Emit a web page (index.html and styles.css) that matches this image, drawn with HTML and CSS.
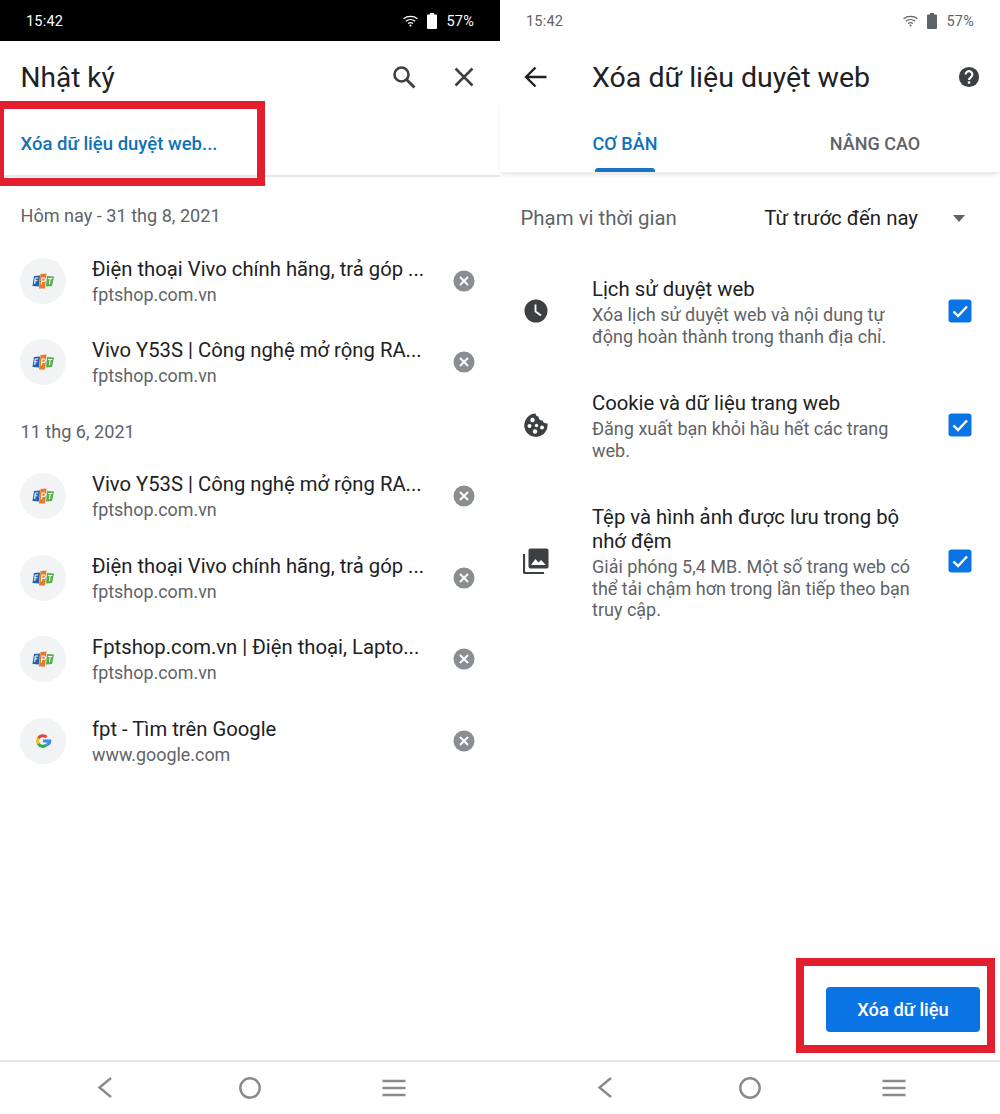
FILE: index.html

```html
<!DOCTYPE html>
<html lang="vi">
<head>
  <meta charset="UTF-8" />
  <meta name="viewport" content="width=device-width, initial-scale=1.0"/>
  <title>Xóa dữ liệu duyệt web</title>
  <link rel="stylesheet" href="styles.css">
</head>
<body>
  <svg class="defs" width="0" height="0" aria-hidden="true">
    <symbol id="wifi" viewBox="0 0 16 12">
      <path d="M.6 3.6C4.6.3 11.4.3 15.4 3.6M3 6.2c2.9-2.3 7.1-2.3 10 0M5.4 8.6c1.5-1.100 3.700-1.100 5.200 0" fill="none" stroke="currentColor" stroke-width="1.3"/>
      <circle cx="8" cy="10.8" r="1.100" fill="currentColor"/>
    </symbol>
    <symbol id="battery" viewBox="0 0 10 16">
      <path d="M3 0h4v1.500h2a1 1 0 0 1 1 1V15a1 1 0 0 1-1 1H1a1 1 0 0 1-1-1V2.500a1 1 0 0 1 1-1h2z" fill="currentColor"/>
    </symbol>
    <symbol id="remove" viewBox="0 0 22 22">
      <circle cx="11" cy="11" r="10.5" fill="#8a8d91"/>
      <path d="M7 7l8 8M15 7l-8 8" stroke="#fff" stroke-width="2" fill="none"/>
    </symbol>
    <symbol id="fpt" viewBox="0 0 22 16">
      <path d="M2 3L8 2.500 7 13.500 .5 13z" fill="#1f63ae"/>
      <path d="M8.500 1L14.500 .5 13 15.500 7 15.500z" fill="#e9782a"/>
      <path d="M15 3L22 3.500 20 13 14 13.500z" fill="#54b047"/>
      <path d="M3.200 5h3M3.200 5L2.700 11M3 7.800h2.400M9.400 11.500L10 5h1.800a1.500 1.500 0 0 1 0 3.400H9.800M16 5.500h4.400M18.200 5.500l-.7 5.800" fill="none" stroke="#fff" stroke-width="1.100"/>
    </symbol>
    <symbol id="check" viewBox="0 0 24 24">
      <rect x=".5" y=".5" width="23" height="23" rx="3" fill="#0b74e5"/>
      <path d="M5.500 12.500l4.500 4.500 9-9.500" fill="none" stroke="#fff" stroke-width="2.400"/>
    </symbol>
    <symbol id="nav-back" viewBox="0 0 16 24">
      <path d="M14 2L2.500 11.500 14 21" fill="none" stroke="currentColor" stroke-width="2.400"/>
    </symbol>
    <symbol id="nav-home" viewBox="0 0 24 24">
      <circle cx="12" cy="12" r="9.700" fill="none" stroke="currentColor" stroke-width="2.400"/>
    </symbol>
    <symbol id="nav-menu" viewBox="0 0 24 18">
      <path d="M.5 2h23M.5 9h23M.5 16h23" fill="none" stroke="currentColor" stroke-width="2.400"/>
    </symbol>
  </svg>

  <div class="screens">
    <!-- history -->
    <section class="screen">
      <div class="status status-dark">
        <span>15:42</span>
        <span class="status-right">
          <svg class="ic-wifi"><use href="#wifi"/></svg>
          <svg class="ic-battery"><use href="#battery"/></svg>
          <span>57%</span>
        </span>
      </div>
      <header class="appbar">
        <h1 class="appbar-title">Nhật ký</h1>
        <svg class="appbar-btn search-btn" viewBox="0 0 24 24"><circle cx="9.500" cy="9.500" r="7" fill="none" stroke="#3c4043" stroke-width="2.600"/><path d="M14.500 14.500L22.500 22.500" stroke="#3c4043" stroke-width="2.800"/></svg>
        <svg class="appbar-btn close-btn" viewBox="0 0 24 24"><path d="M3.500 3.500l17 17M20.500 3.500l-17 17" stroke="#3c4043" stroke-width="2.500"/></svg>
      </header>
      <a class="clear-link">Xóa dữ liệu duyệt web...</a>

      <div class="day day-first">Hôm nay - 31 thg 8, 2021</div>
      <div class="entry">
        <span class="favicon"><svg class="fav-fpt"><use href="#fpt"/></svg></span>
        <div class="entry-text">
          <div class="entry-title">Điện thoại Vivo chính hãng, trả góp ...</div>
          <div class="entry-url">fptshop.com.vn</div>
        </div>
        <svg class="entry-remove"><use href="#remove"/></svg>
      </div>
      <div class="entry">
        <span class="favicon"><svg class="fav-fpt"><use href="#fpt"/></svg></span>
        <div class="entry-text">
          <div class="entry-title">Vivo Y53S | Công nghệ mở rộng RA...</div>
          <div class="entry-url">fptshop.com.vn</div>
        </div>
        <svg class="entry-remove"><use href="#remove"/></svg>
      </div>

      <div class="day">11 thg 6, 2021</div>
      <div class="entry">
        <span class="favicon"><svg class="fav-fpt"><use href="#fpt"/></svg></span>
        <div class="entry-text">
          <div class="entry-title">Vivo Y53S | Công nghệ mở rộng RA...</div>
          <div class="entry-url">fptshop.com.vn</div>
        </div>
        <svg class="entry-remove"><use href="#remove"/></svg>
      </div>
      <div class="entry">
        <span class="favicon"><svg class="fav-fpt"><use href="#fpt"/></svg></span>
        <div class="entry-text">
          <div class="entry-title">Điện thoại Vivo chính hãng, trả góp ...</div>
          <div class="entry-url">fptshop.com.vn</div>
        </div>
        <svg class="entry-remove"><use href="#remove"/></svg>
      </div>
      <div class="entry">
        <span class="favicon"><svg class="fav-fpt"><use href="#fpt"/></svg></span>
        <div class="entry-text">
          <div class="entry-title">Fptshop.com.vn | Điện thoại, Lapto...</div>
          <div class="entry-url">fptshop.com.vn</div>
        </div>
        <svg class="entry-remove"><use href="#remove"/></svg>
      </div>
      <div class="entry">
        <span class="favicon">
          <svg class="fav-google" viewBox="0 0 24 24">
            <path d="M5.800 8.500A7 7 0 0 1 16.700 6.800" fill="none" stroke="#ea4335" stroke-width="4"/>
            <path d="M5.800 15.500a7 7 0 0 1 0-7" fill="none" stroke="#fbbc05" stroke-width="4"/>
            <path d="M17 17a7 7 0 0 1-11.200-1.500" fill="none" stroke="#34a853" stroke-width="4"/>
            <path d="M12 12h9c0 2-1.300 4-4 5" fill="none" stroke="#4285f4" stroke-width="4"/>
          </svg>
        </span>
        <div class="entry-text">
          <div class="entry-title">fpt - Tìm trên Google</div>
          <div class="entry-url">www.google.com</div>
        </div>
        <svg class="entry-remove"><use href="#remove"/></svg>
      </div>

      <nav class="navbar">
        <svg class="nav-back"><use href="#nav-back"/></svg>
        <svg class="nav-home"><use href="#nav-home"/></svg>
        <svg class="nav-menu"><use href="#nav-menu"/></svg>
      </nav>
      <div class="callout callout-link"></div>
    </section>

    <!-- clear browsing data -->
    <section class="screen">
      <div class="status status-light">
        <span>15:42</span>
        <span class="status-right">
          <svg class="ic-wifi"><use href="#wifi"/></svg>
          <svg class="ic-battery"><use href="#battery"/></svg>
          <span>57%</span>
        </span>
      </div>
      <header class="appbar appbar-clear">
        <svg class="back-btn" viewBox="0 0 24 24"><path d="M22.500 12H2.500M11.500 2.500L2 12l9.500 9.500" fill="none" stroke="#202124" stroke-width="2.400"/></svg>
        <h1 class="appbar-title clear-title">Xóa dữ liệu duyệt web</h1>
        <svg class="help-btn" viewBox="0 0 24 24">
          <circle cx="12" cy="12" r="11" fill="#3c4043"/>
          <path d="M8.400 9.200a3.600 3.600 0 1 1 5.700 2.900c-1.300 1-2.100 1.500-2.100 3.100" fill="none" stroke="#fff" stroke-width="2.400"/>
          <rect x="10.700" y="16.700" width="2.600" height="2.600" fill="#fff"/>
        </svg>
      </header>
      <div class="tabs">
        <div class="tab tab-active">CƠ BẢN</div>
        <div class="tab">NÂNG CAO</div>
      </div>
      <div class="range">
        <span class="range-label">Phạm vi thời gian</span>
        <span class="range-value">Từ trước đến nay</span>
        <span class="range-caret"></span>
      </div>

      <div class="option">
        <svg class="option-icon" viewBox="0 0 24 24">
          <circle cx="12" cy="12" r="11.500" fill="#3c4043"/>
          <path d="M11.500 5.500v7l5.500 4" fill="none" stroke="#fff" stroke-width="1.800"/>
        </svg>
        <div class="option-text">
          <div class="option-title">Lịch sử duyệt web</div>
          <div class="option-desc">Xóa lịch sử duyệt web và nội dung tự động hoàn thành trong thanh địa chỉ.</div>
        </div>
        <svg class="option-check"><use href="#check"/></svg>
      </div>
      <div class="option">
        <svg class="option-icon" viewBox="0 0 24 24">
          <path d="M11.500.5c.3 2 1.200 3 3 3 0 2.500 1.500 4 4 4 .3 1.800 2 3 5 3A11.700 11.700 0 1 1 11.500.5z" fill="#3c4043"/>
          <circle cx="8.500" cy="7" r="2.200" fill="#fff"/>
          <circle cx="5.500" cy="13" r="2" fill="#fff"/>
          <circle cx="12.500" cy="12.500" r="1.700" fill="#fff"/>
          <circle cx="18" cy="14.500" r="2" fill="#fff"/>
          <circle cx="11" cy="18.500" r="2.200" fill="#fff"/>
        </svg>
        <div class="option-text">
          <div class="option-title">Cookie và dữ liệu trang web</div>
          <div class="option-desc">Đăng xuất bạn khỏi hầu hết các trang web.</div>
        </div>
        <svg class="option-check"><use href="#check"/></svg>
      </div>
      <div class="option opt-cache">
        <svg class="option-icon" viewBox="0 0 26 26">
          <path d="M1 6v18a1 1 0 0 0 1 1h19" fill="none" stroke="#3c4043" stroke-width="2.200"/>
          <rect x="5.500" y=".5" width="20" height="20" rx="2" fill="#3c4043"/>
          <path d="M8 17l4.500-6 3 3.500 2.500-2.500 5 5z" fill="#fff"/>
        </svg>
        <div class="option-text">
          <div class="option-title">Tệp và hình ảnh được lưu trong bộ nhớ đệm</div>
          <div class="option-desc">Giải phóng 5,4 MB. Một số trang web có thể tải chậm hơn trong lần tiếp theo bạn truy cập.</div>
        </div>
        <svg class="option-check"><use href="#check"/></svg>
      </div>

      <div class="footer">
        <button class="clear-btn">Xóa dữ liệu</button>
      </div>
      <nav class="navbar">
        <svg class="nav-back"><use href="#nav-back"/></svg>
        <svg class="nav-home"><use href="#nav-home"/></svg>
        <svg class="nav-menu"><use href="#nav-menu"/></svg>
      </nav>
      <div class="callout callout-btn"></div>
    </section>
  </div>
</body>
</html>
```

FILE: styles.css

```css
* {
  box-sizing: border-box;
}
body {
  margin: 0;
  font-family: Roboto, "Noto Sans", sans-serif;
  background-color: #fff;
  color: #202124;
}
.defs {
  position: absolute;
}
.screens {
  display: flex;
  width: 1000px;
  height: 1114px;
  overflow: hidden;
}
.screen {
  position: relative;
  display: flex;
  flex-direction: column;
  width: 500px;
  height: 1114px;
}

/* status bar */
.status {
  display: flex;
  flex: none;
  align-items: center;
  justify-content: space-between;
  height: 41px;
  padding: 1px 26px 0;
  font-size: 14.5px;
  letter-spacing: .2px;
}
.status-dark {
  background-color: #000;
  color: #fff;
}
.status-light {
  color: #5f6368;
}
.status-right {
  display: flex;
  align-items: center;
}
.ic-wifi {
  width: 15px;
  height: 12px;
  margin-right: 9px;
}
.ic-battery {
  width: 10px;
  height: 16px;
  margin-right: 9px;
}

/* app bar */
.appbar {
  display: flex;
  flex: none;
  align-items: center;
  height: 60px;
  padding: 12px 0 0 20.5px;
}
.appbar-title {
  flex: 1;
  margin: 0;
  font-size: 28px;
  font-weight: 400;
  color: #202124;
}
.appbar-btn {
  flex: none;
  width: 24px;
  height: 24px;
}
.search-btn {
  margin-right: 36px;
}
.close-btn {
  margin-right: 24px;
}
.clear-link {
  display: flex;
  flex: none;
  align-items: center;
  height: 76px;
  padding: 12px 0 0 20.5px;
  border-bottom: 2px solid #e8e8e8;
  font-size: 18.5px;
  font-weight: 500;
  color: #1072b8;
}

/* history list */
.day {
  display: flex;
  flex: none;
  align-items: center;
  height: 52.5px;
  padding: 4px 0 0 20.5px;
  font-size: 18.1px;
  color: #5f6368;
}
.day-first {
  height: 63px;
  padding-top: 14px;
}
.entry {
  display: flex;
  flex: none;
  align-items: center;
  height: 81.5px;
  padding-left: 20px;
}
.favicon {
  display: flex;
  flex: none;
  align-items: center;
  justify-content: center;
  width: 46px;
  height: 46px;
  border-radius: 50%;
  background-color: #f1f3f4;
}
.fav-fpt {
  width: 22px;
  height: 16px;
}
.fav-google {
  width: 18px;
  height: 18px;
}
.entry-text {
  flex: 1;
  margin-left: 26px;
  padding-top: 2px;
  white-space: nowrap;
}
.entry-title {
  font-size: 20.25px;
  line-height: 26px;
  color: #202124;
}
.entry-url {
  font-size: 17.9px;
  line-height: 26px;
  color: #5f6368;
}
.entry-remove {
  flex: none;
  width: 22px;
  height: 22px;
  margin-right: 25px;
}

/* clear browsing data */
.appbar-clear {
  padding-left: 24px;
}
.back-btn {
  flex: none;
  width: 24px;
  height: 24px;
}
.clear-title {
  margin-left: 44px;
  font-size: 28.5px;
}
.help-btn {
  flex: none;
  width: 22px;
  height: 22px;
  margin-right: 20px;
}
.tabs {
  display: flex;
  flex: none;
  height: 72px;
  box-shadow: 0 3px 5px -2px rgba(0, 0, 0, .14);
  border-bottom: 1px solid #eee;
}
.tab {
  position: relative;
  flex: none;
  width: 250px;
  padding-top: 32px;
  text-align: center;
  font-size: 18px;
  font-weight: 500;
  color: #5f6368;
}
.tab-active {
  color: #1072b8;
}
.tab-active::after {
  content: "";
  position: absolute;
  left: 95px;
  bottom: 0;
  width: 60px;
  height: 4px;
  border-radius: 3px 3px 0 0;
  background-color: #1a73c8;
}
.range {
  display: flex;
  flex: none;
  align-items: center;
  height: 81px;
  padding: 9px 35px 0 20.5px;
  font-size: 20.4px;
}
.range-label {
  flex: 1;
  color: #5f6368;
}
.range-value {
  color: #202124;
}
.range-caret {
  width: 0;
  height: 0;
  margin-left: 35px;
  border-left: 6.5px solid transparent;
  border-right: 6.5px solid transparent;
  border-top: 7px solid #5f6368;
}
.option {
  display: flex;
  flex: none;
  align-items: center;
  height: 114px;
  padding-left: 24px;
}
.opt-cache {
  height: 158px;
}
.option-icon {
  flex: none;
  width: 24px;
  height: 24px;
}
.opt-cache .option-icon {
  width: 26px;
  height: 26px;
  margin-left: -1px;
  margin-right: -1px;
}
.option-text {
  width: 322px;
  margin-left: 44px;
  margin-right: 34px;
  padding-top: 2px;
}
.opt-cache .option-text {
  padding-top: 3px;
}
.option-title {
  font-size: 20.3px;
  line-height: 24px;
  color: #202124;
}
.option-desc {
  margin-top: 3.5px;
  font-size: 18px;
  line-height: 21.5px;
  color: #5f6368;
}
.option-check {
  flex: none;
  width: 24px;
  height: 24px;
}
.footer {
  display: flex;
  flex: 1;
  align-items: flex-end;
  justify-content: flex-end;
  padding: 0 20px 28px 0;
}
.clear-btn {
  width: 154px;
  height: 45px;
  border: none;
  border-radius: 4px;
  background-color: #0b74e5;
  color: #fff;
  font-family: inherit;
  font-size: 18.3px;
  font-weight: 500;
}

/* bottom navigation */
.navbar {
  display: flex;
  flex: none;
  align-items: center;
  margin-top: auto;
  height: 54px;
  border-top: 2px solid #e6e6e6;
  color: #8a8a8a;
}
.nav-back {
  width: 16px;
  height: 24px;
  margin-left: 97px;
}
.nav-home {
  width: 24px;
  height: 24px;
  margin-left: 125px;
}
.nav-menu {
  width: 24px;
  height: 18px;
  margin-left: 120px;
}

/* red highlight frames drawn over the screens */
.callout {
  position: absolute;
  border: 8px solid #e31e2d;
}
.callout-link {
  left: 0;
  top: 101px;
  width: 265px;
  height: 85px;
  border-left-width: 4px;
}
.callout-btn {
  left: 296px;
  top: 958px;
  width: 199px;
  height: 95px;
}
```
